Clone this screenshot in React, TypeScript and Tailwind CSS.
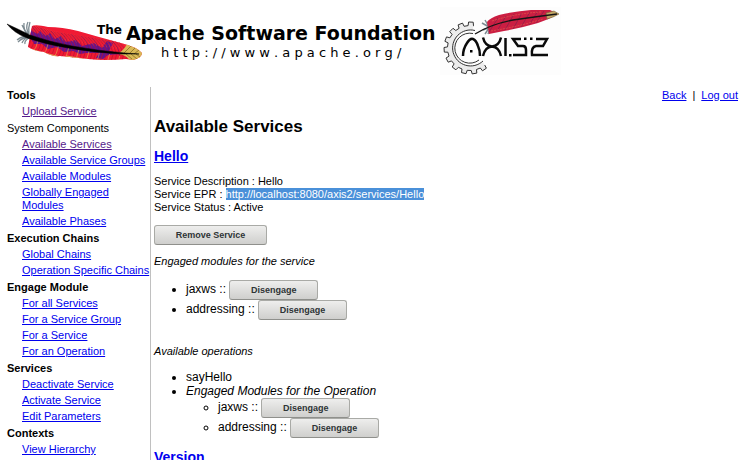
import React from "react";

type NavLink = { label: string; visited?: boolean };
type Section = { title: string; strong?: boolean; links: NavLink[] };

const sections: Section[] = [
  { title: "Tools", strong: true, links: [{ label: "Upload Service", visited: true }] },
  {
    title: "System Components",
    links: [
      { label: "Available Services", visited: true },
      { label: "Available Service Groups" },
      { label: "Available Modules" },
      { label: "Globally Engaged Modules" },
      { label: "Available Phases" },
    ],
  },
  {
    title: "Execution Chains",
    strong: true,
    links: [{ label: "Global Chains" }, { label: "Operation Specific Chains" }],
  },
  {
    title: "Engage Module",
    strong: true,
    links: [
      { label: "For all Services" },
      { label: "For a Service Group" },
      { label: "For a Service" },
      { label: "For an Operation" },
    ],
  },
  {
    title: "Services",
    strong: true,
    links: [{ label: "Deactivate Service" }, { label: "Activate Service" }, { label: "Edit Parameters" }],
  },
  { title: "Contexts", strong: true, links: [{ label: "View Hierarchy" }] },
];

const barbs = Array.from({ length: 30 }, (_, i) => {
  const x = 28 + i * 3.4;
  return { x, y: 36 + (x - 26) * 0.3 - Math.max(0, x - 60) * 0.14 };
});

function ApacheFeather() {
  return (
    <svg className="h-12 w-35 shrink-0" viewBox="5 18 140 48" aria-hidden="true">
      <g stroke="#7d8b92" strokeWidth="1.3" fill="none">
        <path d="M28 34Q23 30 24 23M29 34Q25 28 28 22M29 34Q28 28 30 22M27 35L22 25" />
        <path d="M28 36Q22 36 17 40M28 37Q22 38 18 42M28 37Q23 40 22 43M29 38Q24 41 25 44" />
      </g>
      <clipPath id="apache-feather">
        <path d="M32 26Q36 24 48 27Q62 27 78 31L99 37L121 43Q137 47 142 53Q142 58 133 60L126 59Q105 61 88 59L60 56Q52 57 44 52Q34 51 28 47L30 36Z" />
      </clipPath>
      <g clipPath="url(#apache-feather)">
        <path fill="#f01a34" d="M20 20H145V65H20Z" />
        <path
          fill="#64148e"
          d="M31 30L37 34L40 31L46 36L50 33L55 39L61 36L66 42L76 40L82 46L94 43L102 48L107 41L113 43L109 51L122 54L108 55L103 59L96 58L99 53L86 53L80 54L73 51L64 52L57 47L48 49L42 44L34 44L30 37Z"
        />
        <g fill="none" strokeWidth="0.7">
          {barbs.map((b, i) => (
            <g key={b.x}>
              <path stroke={i % 3 ? "#b01238" : "#7a1350"} d={`M${b.x} ${b.y}q-1 -9 -8 -15`} />
              <path stroke={i % 3 ? "#b8142e" : "#e0a04a"} d={`M${b.x} ${b.y}q-1 8 -7 14`} />
              <path stroke="#ff5040" strokeWidth="0.5" d={`M${b.x + 1} ${b.y - 6}q-1 -5 -6 -9`} />
            </g>
          ))}
        </g>
        <path fill="#d9b956" d="M119 53Q124 50 127 44H146V62H131Q127 55 119 54Z" />
        <path fill="none" stroke="#7d6420" strokeWidth="0.7" d="M124 53L131 46M129 54L135 48M134 54L139 50M126 54L132 59M131 54L137 59M136 54L140 57" />
        <path fill="none" stroke="#dcb45a" strokeWidth="1.2" d="M30 49L44 53L60 57M66 56L84 59" />
      </g>
      <path d="M7 24Q18 29 30 35Q50 42 72 46Q100 51 125 53L139 54L122 54Q95 53 68 48Q48 45 27 38Q14 33 7 24Z" stroke="#000" strokeWidth="0.5" />
    </svg>
  );
}

const gearTeeth = Array.from({ length: 10 }, (_, i) => {
  const a = ((-88 - i * 24) * Math.PI) / 180;
  const at = (r: number, d: number) => `${(471 + r * Math.cos(a + d)).toFixed(1)} ${(48 + r * Math.sin(a + d)).toFixed(1)}`;
  return `${at(22.5, 0.12)}L${at(26, 0.09)}L${at(26, -0.09)}L${at(22.5, -0.12)}`;
}).join("L");

function AxisLogo() {
  return (
    <svg className="h-17 w-31 shrink-0" viewBox="441 7 124 68" role="img" aria-label="Axis2">
      <path d="M441 7H562V75H441Z" fill="#fdfdfd" />
      <path d={`M474 26L${gearTeeth}L484 62A18 18 0 1 1 474 30Z`} fill="#ececec" />
      <g fill="none" stroke="#333" strokeWidth="1">
        <path d={`M474 26L${gearTeeth}`} />
        <path d="M476 30.500A18 18 0 1 0 484 61" />
        <path d="M474 33.500A15 15 0 1 0 480 60" />
      </g>
      <g fill="none" stroke="#0a0a0a" strokeWidth="2.500">
        <path d="M464 56Q464 49 468 43Q471 38 474 39Q477 40 479 46Q481 50 481 56" />
        <path d="M484 37.500Q486 46 493 46.500Q500 46 502 37.500M484 56Q486 47 493 46.500Q500 47 502 56" />
        <path d="M506.500 38V56M522 39H514L519 46H524Q527 46 527 50V55H514" />
        <path d="M537 39H548L544 46H537Q532 47 533 55H549" />
      </g>
      <path d="M471 50h2.500v2.500h-2.500zM510 54h2.500v2.500h-2.500zM525 37.500h2.500v2.500h-2.500zM531 37.500h2.500v2.500h-2.500z" />
      <path fill="none" stroke="#7b8b92" strokeWidth="1.500" d="M490 27L483 23M490 27L486 20M489 28L484 30M490 28L486 34M491 29L489 34" />
      <path d="M488 22Q491 18 500 15Q517 11 532 10L551 10L559 14Q549 20 539 23Q522 28 505 31L490 34Z" fill="#cb1e42" />
      <path fill="none" stroke="#84204b" strokeWidth="0.700" d="M490 32L499 18M498 31L507 16M506 30L515 14M514 29L523 13M522 27L531 12M530 25L539 11M537 23L545 11" />
      <path fill="none" stroke="#e45a4e" strokeWidth="0.700" strokeDasharray="2 1" d="M492 31Q518 27 544 19M493 21Q518 13 543 12" />
      <path fill="#c3a765" stroke="#76613b" strokeWidth="0.600" d="M547 13L555 11L560 14L554 17L548 19Z" />
      <path fill="none" stroke="#151515" strokeWidth="1.300" d="M476 34Q492 24 514 20Q535 17 558 14" />
    </svg>
  );
}

function TextLink({ label, visited }: NavLink) {
  return (
    <a href="#" className={`underline ${visited ? "text-[#551a8b]" : "text-[#0000ee]"}`}>
      {label}
    </a>
  );
}

function PushButton({ label, wide }: { label: string; wide?: boolean }) {
  return (
    <button
      type="button"
      className={`h-5 rounded-[3px] border border-[#a9aaa6] border-b-[#8f908c] bg-linear-to-b from-[#eeeeed] to-[#cfcfcd] align-top text-[9px] leading-3 font-bold text-[#2e3436] ${wide ? "w-[113px]" : "w-[89px]"}`}
    >
      {label}
    </button>
  );
}

function ModuleItems() {
  return (
    <>
      {["jaxws", "addressing"].map((name) => (
        <li key={name} className="h-5 leading-[18px]">
          {name} :: <PushButton label="Disengage" />
        </li>
      ))}
    </>
  );
}

export default function App() {
  return (
    <div className="bg-white pt-[7px] pl-[5px] font-['Liberation_Sans',Arial,sans-serif] text-[11px] leading-[13px] text-black">
      <header className="flex h-17 items-start">
        <div className="flex pt-[11px]">
          <ApacheFeather />
          <div className="-ml-12 w-[343px] font-['DejaVu_Sans',Verdana,sans-serif] whitespace-nowrap">
            <div className="flex items-start gap-1 pt-[3px] font-bold">
              <span className="pt-px text-[12px] leading-4">The</span>
              <span className="text-[19px] leading-6">Apache Software Foundation</span>
            </div>
            <div className="pl-[64px] text-[13px] leading-4">h t t p : / / w w w . a p a c h e . o r g /</div>
          </div>
        </div>
        <AxisLogo />
      </header>

      <div className="flex items-start pt-3">
        <nav className="w-[146px] shrink-0 border-r border-[#c0c0c0] pb-1 pl-[2px]">
          {sections.map((section) => (
            <section key={section.title}>
              <h2 className={`pt-[2px] pb-[2px] leading-[13px] ${section.strong ? "font-bold" : "font-normal"}`}>{section.title}</h2>
              <ul className="pl-[15px]">
                {section.links.map((link) => (
                  <li key={link.label} className="pt-px pb-[2px]">
                    <TextLink {...link} />
                  </li>
                ))}
              </ul>
            </section>
          ))}
        </nav>

        <main className="min-w-0 grow pl-[3px]">
          <div className="flex justify-end gap-[6px] pt-[2px] pr-[13px]">
            <TextLink label="Back" />
            <span>|</span>
            <TextLink label="Log out" />
          </div>
          <h1 className="pt-[15px] text-[17px] leading-5 font-bold">Available Services</h1>
          <h2 className="pt-[11px] text-[14px] leading-4 font-bold">
            <TextLink label="Hello" />
          </h2>
          <p className="pt-[11px]">
            Service Description : Hello
            <br />
            Service EPR : <span className="bg-[#4a90d9] text-white">http://localhost:8080/axis2/services/Hello</span>
            <br />
            Service Status : Active
          </p>
          <div className="flex pt-[11px]">
            <PushButton label="Remove Service" wide />
          </div>
          <p className="pt-[10px] italic">Engaged modules for the service</p>
          <ul className="list-disc pt-3 pl-8 text-[12px]">
            <ModuleItems />
          </ul>
          <p className="pt-[25px] italic">Available operations</p>
          <ul className="list-disc pt-3 pl-8 text-[12px] leading-[14px]">
            <li>sayHello</li>
            <li>
              <i>Engaged Modules for the Operation</i>
              <ul className="list-[circle] pl-8">
                <ModuleItems />
              </ul>
            </li>
          </ul>
          <h2 className="pt-[11px] text-[14px] leading-4 font-bold">
            <TextLink label="Version" />
          </h2>
        </main>
      </div>
    </div>
  );
}
